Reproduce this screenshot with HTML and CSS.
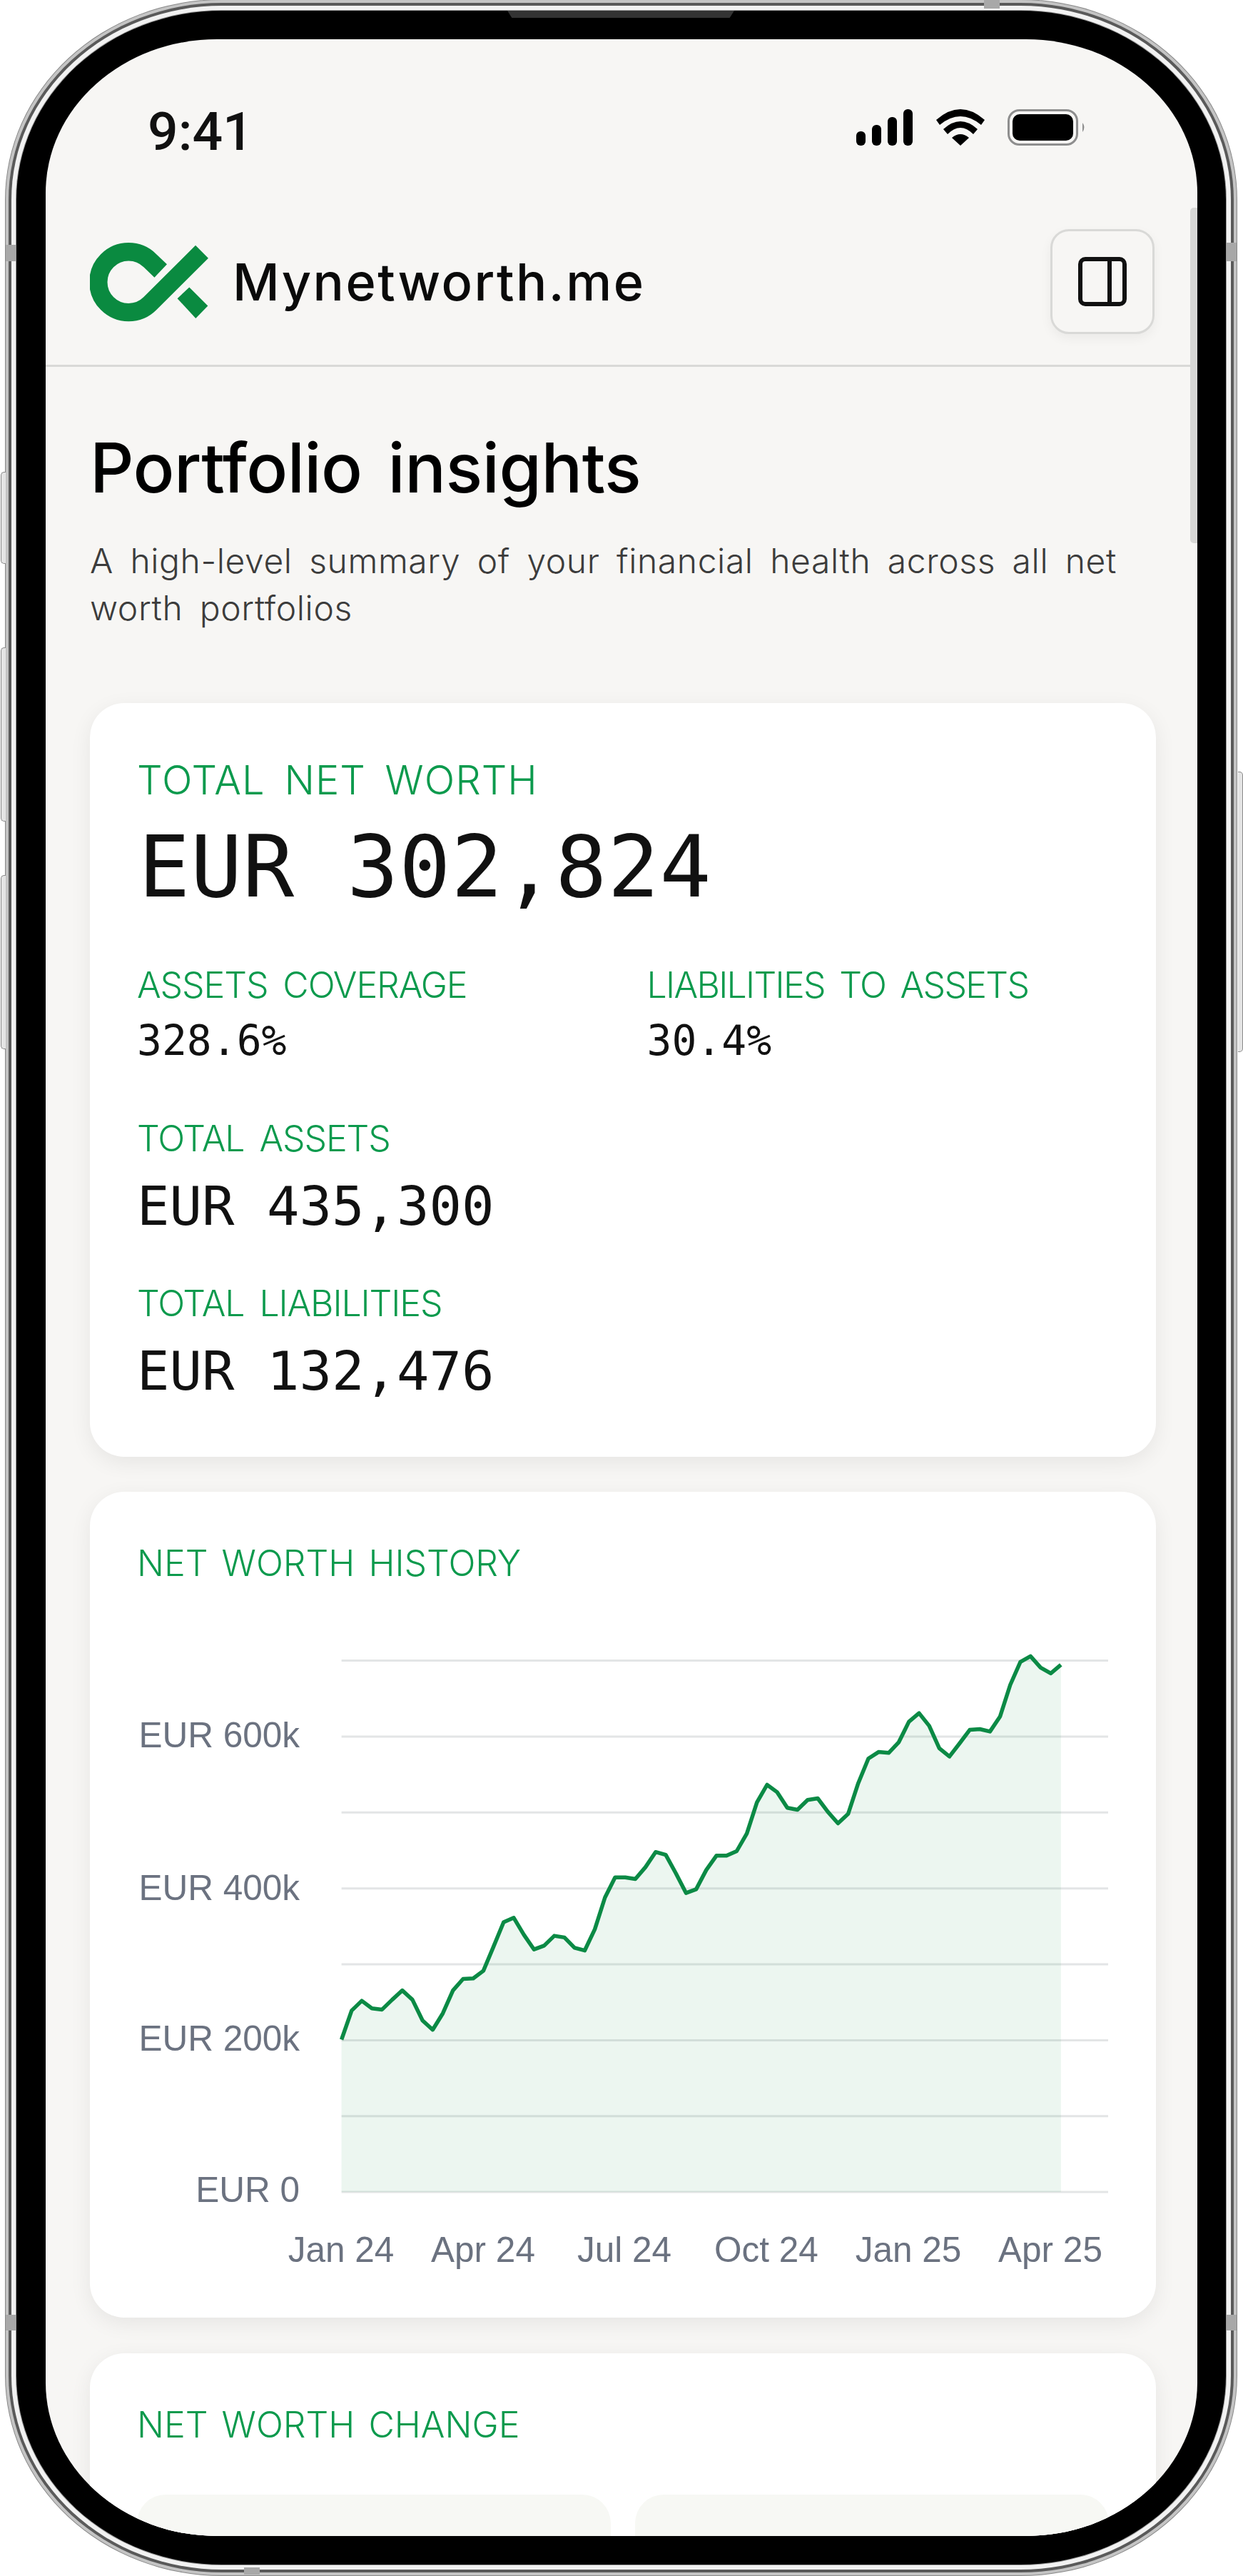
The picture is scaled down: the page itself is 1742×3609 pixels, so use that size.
FILE: index.html
```html
<!DOCTYPE html>
<html lang="en">
<head>
  <meta charset="UTF-8">
  <meta name="viewport" content="width=device-width, initial-scale=1.0">
  <title>Mynetworth.me - Portfolio insights</title>
  <link rel="stylesheet" href="styles.css">
</head>
<body>

<div class="bezel">
  <span class="speaker"></span>
  <span class="band band-top"></span>
  <span class="band band-left-top"></span>
  <span class="band band-right-top"></span>
  <span class="band band-left-bottom"></span>
  <span class="band band-right-bottom"></span>
  <span class="band band-bottom"></span>
  <span class="side-btn side-left side-mute"></span>
  <span class="side-btn side-left side-up"></span>
  <span class="side-btn side-left side-down"></span>
  <span class="side-btn side-right side-power"></span>

  <div class="screen">
    <span class="scrollbar"></span>

    <div class="status">
      <span class="time">9:41</span>
      <div class="status-icons">
        <svg class="signal" width="80" height="51" viewBox="0 0 80 51">
          <rect x="0" y="31" width="13" height="20" rx="6"/>
          <rect x="22" y="22" width="13" height="29" rx="6"/>
          <rect x="44" y="11" width="13" height="40" rx="6"/>
          <rect x="66" y="0" width="13" height="51" rx="6"/>
        </svg>
        <svg class="wifi" width="68" height="51" viewBox="0 0 68 51">
          <path d="M0 15Q34 -15 68 15L63 22Q34 -2 5 22Z"/>
          <path d="M10 28Q34 6 58 28L52 35Q34 17 16 35Z"/>
          <path d="M34 51L22 40Q34 30 46 40Z"/>
        </svg>
        <svg class="battery" width="110" height="51" viewBox="0 0 110 51">
          <rect x="1.5" y="1.5" width="96" height="48" rx="15" fill="none" stroke="#8e8e8e" stroke-width="3"/>
          <rect x="7" y="7" width="85" height="37" rx="10"/>
          <path d="M105 19Q110 25 105 32Z" fill="#8e8e8e"/>
        </svg>
      </div>
    </div>

    <header class="topbar">
      <div class="brand">
        <svg class="logo" width="166" height="112" viewBox="78 115 497 335">
          <path d="M375 236L330 193A127 127 0 1 0 330 373L548 156" fill="none" stroke="#0a8a40" stroke-width="76"/>
          <polygon points="445,352 495,305 573,383 522,435" fill="#0a8a40"/>
        </svg>
        <span class="brand-name">Mynetworth.me</span>
      </div>
      <button class="panel-btn" type="button" aria-label="Toggle panel">
        <svg width="68" height="69" viewBox="0 0 68 69" fill="none" stroke="#111" stroke-width="6">
          <rect x="3" y="3" width="62" height="63" rx="7"/>
          <line x1="44" y1="3" x2="44" y2="66"/>
        </svg>
      </button>
    </header>

    <main class="content">
      <h1>Portfolio insights</h1>
      <p class="intro">A high-level summary of your financial health across all net worth portfolios</p>

      <section class="card card-summary">
        <div class="label label-lg">TOTAL NET WORTH</div>
        <div class="value value-xl">EUR 302,824</div>

        <div class="ratios">
          <div>
            <div class="label label-stat">ASSETS COVERAGE</div>
            <div class="value value-sm">328.6%</div>
          </div>
          <div>
            <div class="label label-stat label-narrow">LIABILITIES TO ASSETS</div>
            <div class="value value-sm">30.4%</div>
          </div>
        </div>

        <div class="total total-assets">
          <div class="label label-stat">TOTAL ASSETS</div>
          <div class="value value-md">EUR 435,300</div>
        </div>
        <div class="total total-liabilities">
          <div class="label label-stat">TOTAL LIABILITIES</div>
          <div class="value value-md">EUR 132,476</div>
        </div>
      </section>

      <section class="card card-history">
        <div class="label label-section">NET WORTH HISTORY</div>
        <svg class="chart" width="1370" height="900" viewBox="192 2310 1370 900">
          <g class="grid">
            <line x1="478.6" x2="1553" y1="2326.5" y2="2326.5"/>
            <line x1="478.6" x2="1553" y1="2433" y2="2433"/>
            <line x1="478.6" x2="1553" y1="2539.3" y2="2539.3"/>
            <line x1="478.6" x2="1553" y1="2645.7" y2="2645.7"/>
            <line x1="478.6" x2="1553" y1="2752" y2="2752"/>
            <line x1="478.6" x2="1553" y1="2858.4" y2="2858.4"/>
            <line x1="478.6" x2="1553" y1="2964.7" y2="2964.7"/>
            <line x1="478.6" x2="1553" y1="3071" y2="3071"/>
          </g>
          <polygon class="area" points="478.6,3071 478.6,2857.5 492.8,2816.9 507,2803.1 521.2,2813.8 535.4,2815.4 549.6,2801.6 563.8,2788.6 578,2801.6 592.2,2830.7 606.4,2843.7 620.6,2820.7 634.8,2788.6 649,2772.5 663.2,2771.8 677.4,2761.1 691.6,2727.4 705.8,2693 720,2686.8 734.2,2710.6 748.4,2731.2 762.6,2725.9 776.8,2712.1 791,2714.4 805.2,2728.9 819.4,2732.7 833.6,2702.9 847.8,2658.5 862,2630.2 876.2,2630.2 890.4,2632.5 904.6,2615.9 918.8,2594.7 933,2598.7 947.2,2624.5 961.4,2652.1 975.6,2646.9 989.8,2619.9 1004,2599.8 1018.2,2599.8 1032.4,2593.5 1046.6,2568.8 1060.8,2525.2 1075,2500.5 1089.2,2510.9 1103.4,2532.7 1117.6,2535.5 1131.8,2521.8 1146,2519.5 1160.2,2538.4 1174.4,2554.5 1188.6,2541.3 1202.8,2498.2 1217,2463.8 1231.2,2454.6 1245.4,2455.8 1259.6,2440.8 1273.8,2412.1 1288,2400.1 1302.2,2417.9 1316.4,2449.4 1330.6,2460.9 1344.8,2442.5 1359,2423.6 1373.2,2422.5 1387.4,2425.9 1401.6,2404.7 1415.8,2360.5 1430,2328.3 1444.2,2320.3 1458.4,2336.3 1472.6,2344.4 1486.8,2332.3 1486.8,3071"/>
          <polyline class="line" points="478.6,2857.5 492.8,2816.9 507,2803.1 521.2,2813.8 535.4,2815.4 549.6,2801.6 563.8,2788.6 578,2801.6 592.2,2830.7 606.4,2843.7 620.6,2820.7 634.8,2788.6 649,2772.5 663.2,2771.8 677.4,2761.1 691.6,2727.4 705.8,2693 720,2686.8 734.2,2710.6 748.4,2731.2 762.6,2725.9 776.8,2712.1 791,2714.4 805.2,2728.9 819.4,2732.7 833.6,2702.9 847.8,2658.5 862,2630.2 876.2,2630.2 890.4,2632.5 904.6,2615.9 918.8,2594.7 933,2598.7 947.2,2624.5 961.4,2652.1 975.6,2646.9 989.8,2619.9 1004,2599.8 1018.2,2599.8 1032.4,2593.5 1046.6,2568.8 1060.8,2525.2 1075,2500.5 1089.2,2510.9 1103.4,2532.7 1117.6,2535.5 1131.8,2521.8 1146,2519.5 1160.2,2538.4 1174.4,2554.5 1188.6,2541.3 1202.8,2498.2 1217,2463.8 1231.2,2454.6 1245.4,2455.8 1259.6,2440.8 1273.8,2412.1 1288,2400.1 1302.2,2417.9 1316.4,2449.4 1330.6,2460.9 1344.8,2442.5 1359,2423.6 1373.2,2422.5 1387.4,2425.9 1401.6,2404.7 1415.8,2360.5 1430,2328.3 1444.2,2320.3 1458.4,2336.3 1472.6,2344.4 1486.8,2332.3"/>
          <g class="axis-y">
            <text x="420" y="2448">EUR 600k</text>
            <text x="420" y="2662">EUR 400k</text>
            <text x="420" y="2873">EUR 200k</text>
            <text x="420" y="3085">EUR 0</text>
          </g>
          <g class="axis-x">
            <text x="478" y="3169">Jan 24</text>
            <text x="677" y="3169">Apr 24</text>
            <text x="875" y="3169">Jul 24</text>
            <text x="1074" y="3169">Oct 24</text>
            <text x="1273" y="3169">Jan 25</text>
            <text x="1472" y="3169">Apr 25</text>
          </g>
        </svg>
      </section>

      <section class="card card-change">
        <div class="label label-section">NET WORTH CHANGE</div>
        <div class="tiles">
          <div class="tile"></div>
          <div class="tile"></div>
        </div>
      </section>
    </main>
  </div>
</div>

</body>
</html>
```

FILE: styles.css
```css
html, body {
  margin: 0;
  background: #fff;
}
body {
  padding: 15px 0 0 23px;
  height: 3594px;
  overflow: hidden;
  font-family: Inter, "Noto Sans", sans-serif;
  color: #111;
}

/* phone frame */
.bezel {
  position: relative;
  box-sizing: border-box;
  width: 1695px;
  height: 3578px;
  padding: 40px;
  padding-left: 41px;
  background: #000;
  border-radius: 288px / 265px;
  box-shadow:
    0 0 0 1px #9a9a9a,
    0 0 0 7px #f2f2f2,
    0 0 0 11px #5a5a5a,
    0 0 0 15px #c4c4c4,
    0 0 0 16px #888;
}
.screen {
  position: relative;
  height: 100%;
  overflow: hidden;
  background: #f7f6f4;
  border-radius: 240px / 215px;
}
.speaker {
  position: absolute;
  left: 688px;
  top: 0;
  width: 318px;
  height: 10px;
  background: #333;
  clip-path: polygon(0 0, 100% 0, 98% 100%, 2% 100%);
}
.band {
  position: absolute;
  background: #a8a8a8;
}
.band-top { left: 1356px; top: -15px; width: 22px; height: 12px; }
.band-left-top { left: -15px; top: 328px; width: 14px; height: 23px; }
.band-right-top { right: -15px; top: 325px; width: 14px; height: 26px; }
.band-left-bottom { left: -15px; top: 3228px; width: 14px; height: 22px; }
.band-right-bottom { right: -15px; top: 3228px; width: 14px; height: 22px; }
.band-bottom { left: 319px; bottom: -14px; width: 22px; height: 10px; }
.side-btn {
  position: absolute;
  width: 6px;
  background: #e4e4e4;
  border: 1px solid #8a8a8a;
}
.side-left { left: -22px; border-right: 0; border-radius: 5px 0 0 5px; }
.side-right { right: -24px; border-left: 0; border-radius: 0 5px 5px 0; }
.side-mute { top: 646px; height: 127px; }
.side-up { top: 892px; height: 242px; }
.side-down { top: 1211px; height: 242px; }
.side-power { top: 1066px; height: 391px; }

.scrollbar {
  position: absolute;
  right: 0;
  top: 236px;
  width: 10px;
  height: 470px;
  background: #d8d8d6;
  border-radius: 5px 0 0 5px;
}

/* status bar */
.status {
  display: flex;
  justify-content: space-between;
  box-sizing: border-box;
  height: 222px;
  padding: 98px 156px 0 143px;
}
.time {
  margin-top: -5px;
  font-family: Roboto, sans-serif;
  font-size: 75px;
  font-weight: 500;
  line-height: 73px;
}
.status-icons {
  display: flex;
  gap: 32px;
  align-items: flex-start;
}
.status-icons svg {
  display: block;
  fill: #000;
}

/* top bar */
.topbar {
  display: flex;
  justify-content: space-between;
  align-items: center;
  padding: 45px 60px 44px 62px;
  border-bottom: 3px solid #d9d9d7;
}
.brand {
  display: flex;
  align-items: center;
  gap: 34px;
}
.logo {
  display: block;
}
.brand-name {
  font-size: 72px;
  font-weight: 500;
  line-height: 80px;
  letter-spacing: 2.5px;
  color: #0a0a0a;
}
.panel-btn {
  display: flex;
  align-items: center;
  justify-content: center;
  box-sizing: border-box;
  width: 146px;
  height: 147px;
  margin: -1px 0;
  padding: 0;
  background: #f7f6f4;
  border: 3px solid #d9d9d7;
  border-radius: 26px;
  box-shadow: 0 6px 16px rgba(0, 0, 0, 0.05);
}

/* page content */
.content {
  padding: 91px 58px 0 62px;
}
h1 {
  margin: 0 0 48px;
  font-size: 96px;
  font-weight: 500;
  line-height: 100px;
  letter-spacing: -0.5px;
  word-spacing: 11px;
  color: #000;
}
.intro {
  margin: 0 0 100px;
  font-size: 48px;
  font-weight: 300;
  line-height: 66px;
  letter-spacing: 0.6px;
  word-spacing: 9.4px;
  color: #3c3c3c;
}

.card {
  box-sizing: border-box;
  padding: 73px 66px 0;
  margin-bottom: 49px;
  background: #fff;
  border-radius: 48px;
  box-shadow: 0 8px 30px rgba(0, 0, 0, 0.07);
}
.label {
  font-size: 50px;
  font-weight: 300;
  line-height: 54px;
  color: #0c9a4d;
}
.label-lg {
  font-size: 56px;
  line-height: 60px;
  letter-spacing: 1px;
  word-spacing: 10px;
}
.label-stat {
  letter-spacing: -1.1px;
  word-spacing: 8px;
}
.label-narrow {
  letter-spacing: -1.7px;
}
.label-section {
  word-spacing: 5px;
}
.value {
  font-family: "DejaVu Sans Mono", "Liberation Mono", monospace;
  color: #111;
}
.value-xl {
  margin: 32px 0 0 2px;
  font-size: 120px;
  line-height: 120px;
  letter-spacing: 0.8px;
}
.value-md {
  margin-top: 28px;
  font-size: 75.6px;
  line-height: 80px;
}
.value-sm {
  margin-top: 21px;
  font-size: 58px;
  line-height: 60px;
}

.card-summary {
  padding-top: 78px;
  padding-bottom: 80px;
}
.ratios {
  display: grid;
  grid-template-columns: 1fr 1fr;
  gap: 67px;
  margin-top: 78px;
}
.total-assets {
  margin-top: 80px;
}
.total-liabilities {
  margin-top: 69px;
}

/* chart */
.card-history {
  height: 1157px;
  margin-bottom: 50px;
}
.chart {
  display: block;
  margin-top: 93px;
}
.grid line {
  stroke: #e3e5e6;
  stroke-width: 3;
}
.area {
  fill: #0b8a45;
  fill-opacity: 0.08;
}
.line {
  fill: none;
  stroke: #0b8a45;
  stroke-width: 5.5;
  stroke-linejoin: round;
}
.axis-y text,
.axis-x text {
  font-family: "Liberation Sans", Arial, sans-serif;
  font-size: 49.5px;
  fill: #6b7280;
}
.axis-y text {
  text-anchor: end;
}
.axis-x text {
  text-anchor: middle;
}

.card-change {
  height: 300px;
}
.tiles {
  display: grid;
  grid-template-columns: 1fr 1fr;
  gap: 34px;
  margin-top: 71px;
}
.tile {
  height: 200px;
  background: #f7f8f4;
  border-radius: 40px;
}
```
